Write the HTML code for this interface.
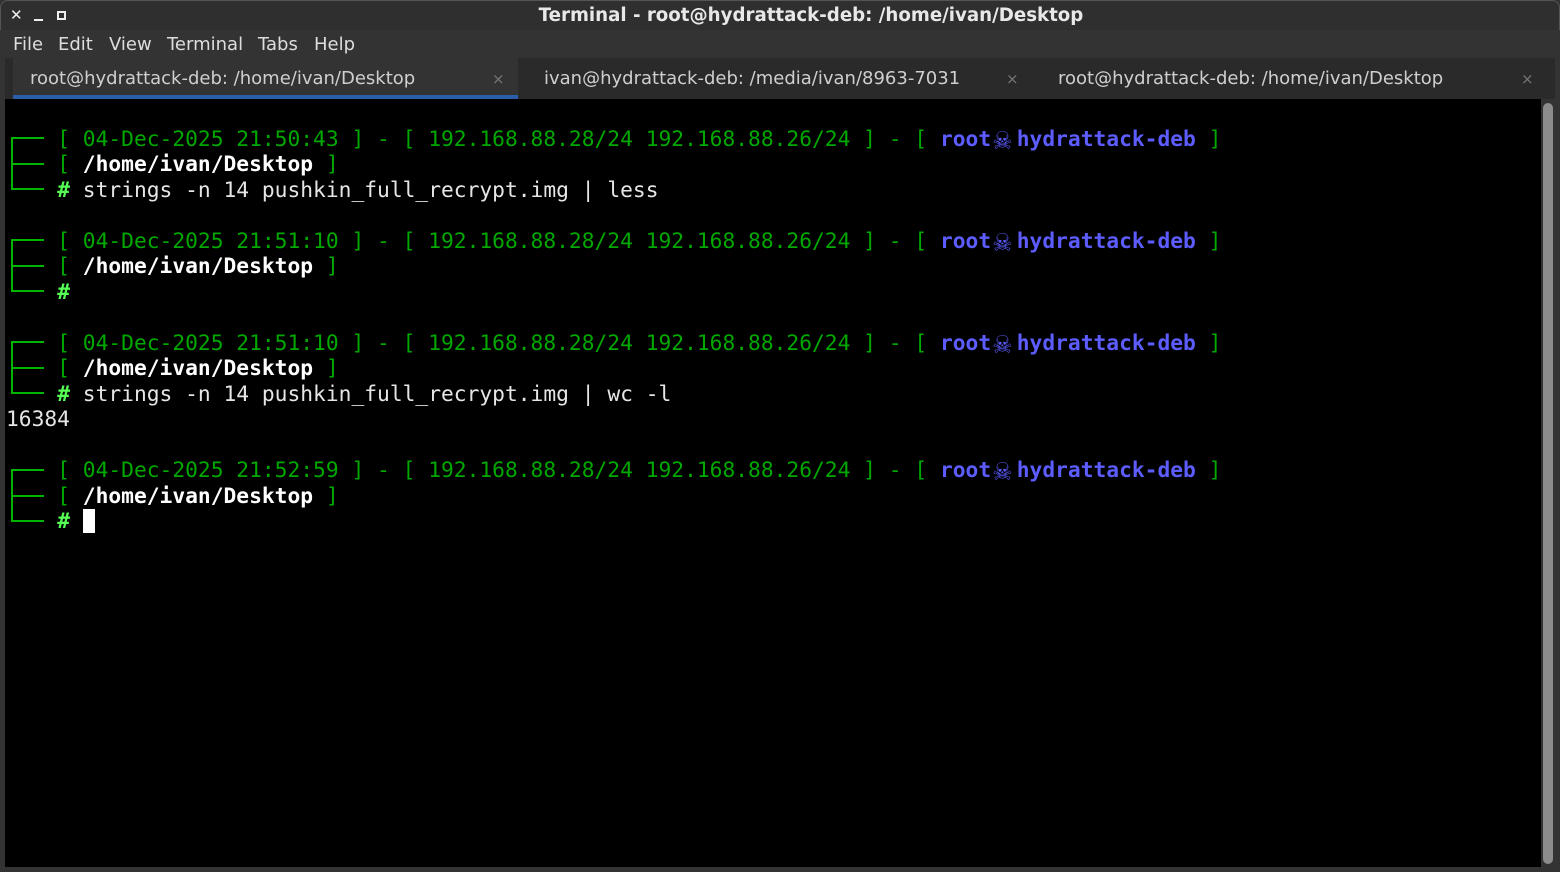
<!DOCTYPE html>
<html><head><meta charset="utf-8"><style>
*{margin:0;padding:0;box-sizing:border-box}
body{width:1560px;height:872px;background:#333;overflow:hidden;position:relative;font-family:"DejaVu Sans","Liberation Sans",sans-serif}
.title{position:absolute;left:0;top:0;width:1560px;height:30px;background:#2f2f2f;border-radius:8px 8px 0 0;border:1px solid #555;border-bottom:none}
.title .t{position:absolute;left:0;right:0;top:4px;text-align:center;color:#e8e8e8;font-weight:bold;font-size:18.2px;padding-left:62px}
.menu{position:absolute;top:30px;left:0;width:1560px;height:28px;background:#333;color:#ddd;font-size:18px}
.menu span{position:absolute;top:4px}
.tabs{position:absolute;top:58px;left:5px;width:1550px;height:41px;background:#2a2a2a}
.tab{position:absolute;top:0;height:41px;color:#cfcfcf;font-size:18px;padding-top:10px}
.tab .x{position:absolute;top:12px;color:#777;font-size:15px}
.term{position:absolute;left:5px;top:99px;width:1536px;height:768px;background:#000}
.sb{position:absolute;left:1543px;top:103px;width:10px;height:761px;background:#8c8c8c;border-radius:5px}
pre{position:absolute;left:6px;top:101px;font-family:"DejaVu Sans Mono","Liberation Mono",monospace;font-size:21.25px;line-height:25.5px;color:#e6e6e6;white-space:pre}
.g{color:#00a800}.G{color:#55ff55;font-weight:bold}.b{color:#5c5cff;font-weight:bold}.w{color:#fff;font-weight:bold}
.sk{display:inline-block;width:25.6px;font-size:30px;line-height:10px;text-align:center;vertical-align:-3px;font-weight:normal;text-indent:-3px;color:#5c5cff}
.l{position:absolute;background:#00b400}
.cur{position:absolute;left:83px;top:509px;width:12px;height:24px;background:#fff}
</style></head><body>
<div class="title">
<span style="position:absolute;left:9px;top:5px;color:#eee;font-size:15px">✕</span>
<span style="position:absolute;left:33px;top:18px;width:9px;height:2px;background:#eee"></span>
<span style="position:absolute;left:56px;top:10px;width:9px;height:9px;border:2px solid #eee"></span>
<div class="t">Terminal - root@hydrattack-deb: /home/ivan/Desktop</div></div>
<div class="menu"><span style="left:13px">File</span><span style="left:58px">Edit</span><span style="left:109px">View</span><span style="left:167px">Terminal</span><span style="left:258px">Tabs</span><span style="left:314px">Help</span></div>
<div class="tabs">
<div class="tab" style="left:8px;width:505px;background:#333;border-bottom:4px solid #2a5ea8"><span style="position:absolute;left:17px">root@hydrattack-deb: /home/ivan/Desktop</span><span class="x" style="left:479px">×</span></div>
<div class="tab" style="left:520px;width:510px"><span style="position:absolute;left:19px">ivan@hydrattack-deb: /media/ivan/8963-7031</span><span class="x" style="left:481px">×</span></div>
<div class="tab" style="left:1035px;width:510px"><span style="position:absolute;left:18px">root@hydrattack-deb: /home/ivan/Desktop</span><span class="x" style="left:481px">×</span></div>
</div>
<div class="term"></div>
<div class="sb"></div>
<pre>

    <span class="g">[ 04-Dec-2025 21:50:43 ] - [ 192.168.88.28/24 192.168.88.26/24 ] - [ </span><span class="b">root<span class="sk">☠</span>hydrattack-deb</span><span class="g"> ]</span>
    <span class="g">[ </span><span class="w">/home/ivan/Desktop</span><span class="g"> ]</span>
    <span class="G">#</span> strings -n 14 pushkin_full_recrypt.img | less

    <span class="g">[ 04-Dec-2025 21:51:10 ] - [ 192.168.88.28/24 192.168.88.26/24 ] - [ </span><span class="b">root<span class="sk">☠</span>hydrattack-deb</span><span class="g"> ]</span>
    <span class="g">[ </span><span class="w">/home/ivan/Desktop</span><span class="g"> ]</span>
    <span class="G">#</span>

    <span class="g">[ 04-Dec-2025 21:51:10 ] - [ 192.168.88.28/24 192.168.88.26/24 ] - [ </span><span class="b">root<span class="sk">☠</span>hydrattack-deb</span><span class="g"> ]</span>
    <span class="g">[ </span><span class="w">/home/ivan/Desktop</span><span class="g"> ]</span>
    <span class="G">#</span> strings -n 14 pushkin_full_recrypt.img | wc -l
16384

    <span class="g">[ 04-Dec-2025 21:52:59 ] - [ 192.168.88.28/24 192.168.88.26/24 ] - [ </span><span class="b">root<span class="sk">☠</span>hydrattack-deb</span><span class="g"> ]</span>
    <span class="g">[ </span><span class="w">/home/ivan/Desktop</span><span class="g"> ]</span>
    <span class="G">#</span>
</pre>
<div class="l" style="left:11px;top:137px;width:2px;height:53px"></div>
<div class="l" style="left:11px;top:137px;width:33px;height:2px"></div>
<div class="l" style="left:11px;top:163px;width:33px;height:2px"></div>
<div class="l" style="left:11px;top:188px;width:33px;height:2px"></div>
<div class="l" style="left:11px;top:239px;width:2px;height:53px"></div>
<div class="l" style="left:11px;top:239px;width:33px;height:2px"></div>
<div class="l" style="left:11px;top:265px;width:33px;height:2px"></div>
<div class="l" style="left:11px;top:290px;width:33px;height:2px"></div>
<div class="l" style="left:11px;top:341px;width:2px;height:53px"></div>
<div class="l" style="left:11px;top:341px;width:33px;height:2px"></div>
<div class="l" style="left:11px;top:367px;width:33px;height:2px"></div>
<div class="l" style="left:11px;top:392px;width:33px;height:2px"></div>
<div class="l" style="left:11px;top:469px;width:2px;height:53px"></div>
<div class="l" style="left:11px;top:469px;width:33px;height:2px"></div>
<div class="l" style="left:11px;top:495px;width:33px;height:2px"></div>
<div class="l" style="left:11px;top:520px;width:33px;height:2px"></div>
<div class="cur"></div>
</body></html>
